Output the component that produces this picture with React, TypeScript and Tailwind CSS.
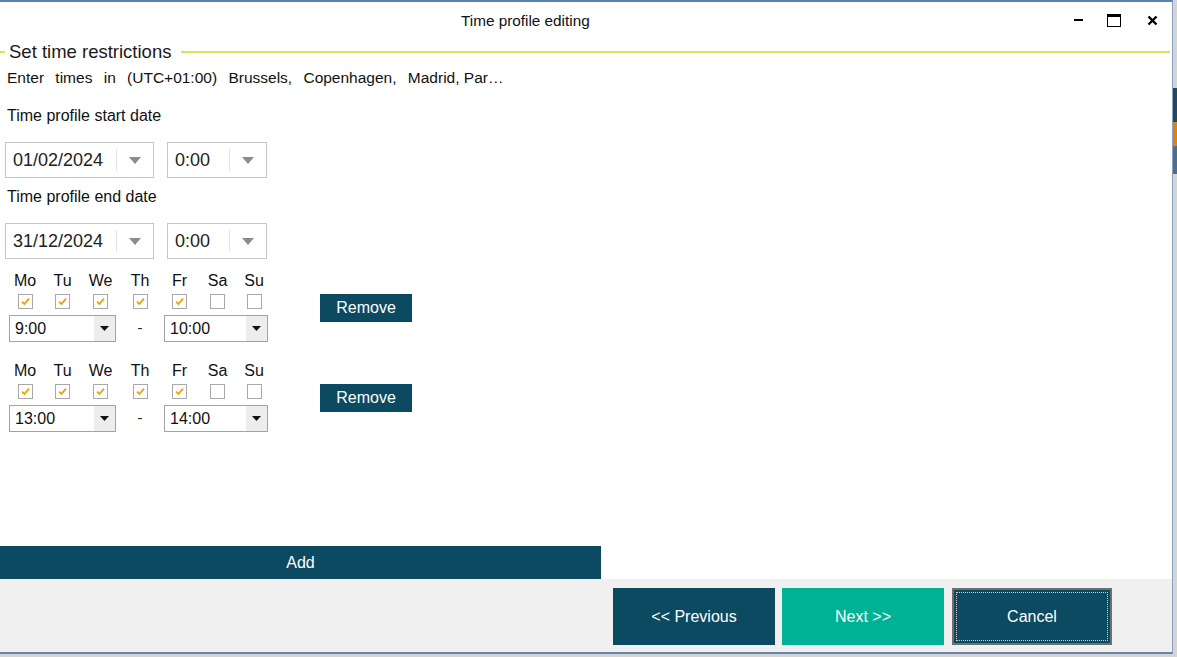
import React from "react";

const font = { fontFamily: '"Liberation Sans", Arial, sans-serif' };

const days = ["Mo", "Tu", "We", "Th", "Fr", "Sa", "Su"];

function Check({ on }: { on: boolean }) {
  return (
    <div className="flex h-[15px] w-[15px] items-center justify-center border border-[#a9a9a9] bg-white">
      {on && (
        <svg width="11" height="11" viewBox="0 0 11 11">
          <path d="M2 5.6 L4.4 8 L9 2.6" fill="none" stroke="#f5a000" strokeWidth="1.8" />
        </svg>
      )}
    </div>
  );
}

function DatePicker({ value, width }: { value: string; width: string }) {
  return (
    <div className={`flex h-[36px] ${width} items-center border border-[#c6c6c6] bg-white`}>
      <span className="flex-1 pl-[7px] text-[18px] text-[#222]">{value}</span>
      <div className="h-[22px] w-px bg-[#e3e3e3]" />
      <div className="flex w-[36px] items-center justify-center">
        <svg width="12" height="7" viewBox="0 0 12 7">
          <path d="M0 0 H12 L6 7 Z" fill="#8c8c8c" />
        </svg>
      </div>
    </div>
  );
}

function Combo({ value, width }: { value: string; width: string }) {
  return (
    <div className={`flex h-[27px] ${width} items-stretch border border-[#a3a3a3] bg-white`}>
      <span className="flex flex-1 items-center pl-[5px] text-[16px] text-[#111]">{value}</span>
      <div className="flex w-[21px] items-center justify-center bg-[#ededed]">
        <svg width="9" height="5" viewBox="0 0 9 5">
          <path d="M0 0 H9 L4.5 5 Z" fill="#111" />
        </svg>
      </div>
    </div>
  );
}

function Schedule({ from, to, mt }: { from: string; to: string; mt: string }) {
  const checked = [true, true, true, true, true, false, false];
  return (
    <div className={`flex ${mt}`}>
      <div className="w-[300px]">
        <div className="ml-[6px] grid grid-cols-[38px_37px_39px_40px_39px_37px_36px]">
          {days.map((d, i) => (
            <div key={d} className="flex flex-col items-center">
              <span className="h-[18px] text-[16px] leading-[18px] text-[#111]">{d}</span>
              <div className="mt-[4px]">
                <Check on={checked[i]} />
              </div>
            </div>
          ))}
        </div>
        <div className="ml-[9px] mt-[6px] flex items-center">
          <Combo value={from} width="w-[107px]" />
          <span className="w-[48px] text-center text-[15px] text-[#222]">-</span>
          <Combo value={to} width="w-[104px]" />
        </div>
      </div>
      <button className="ml-[20px] mt-[22px] h-[28px] w-[92px] self-start bg-[#0b4a61] text-[16px] text-white">
        Remove
      </button>
    </div>
  );
}

export default function App() {
  return (
    <div className="flex h-[657px] w-[1177px] overflow-hidden bg-[#d4d4d4]" style={font}>
      <div className="flex h-[654px] w-[1173px] flex-col border-b-2 border-r border-t-2 border-[#5b7fb8] border-b-[#6b83ab] border-r-[#8aa0c4] bg-white">
        {/* title bar */}
        <div className="relative flex h-[36px] items-center">
          <span className="absolute left-[461px] top-[8px] text-[15.3px] text-[#111]">Time profile editing</span>
          <div className="ml-auto flex items-center">
            <div className="flex w-[36px] justify-center">
              <div className="h-[2px] w-[9px] bg-black" />
            </div>
            <div className="flex w-[36px] justify-center">
              <div className="h-[13px] w-[14px] border-[1.5px] border-t-[3px] border-black" />
            </div>
            <div className="flex w-[40px] justify-center">
              <svg width="11" height="11" viewBox="0 0 11 11">
                <path d="M1.5 1.5 L9.5 9.5 M9.5 1.5 L1.5 9.5" stroke="#000" strokeWidth="2.4" />
              </svg>
            </div>
          </div>
        </div>

        {/* content */}
        <div className="relative flex flex-1 flex-col">
          <div className="mt-[3px] flex h-[22px] items-center pr-[2px]">
            <div className="h-[2px] w-[5px] bg-[#d7e454]" />
            <span className="px-[4px] text-[18.5px] text-[#1a1a1a]">Set time restrictions</span>
            <div className="ml-[6px] h-[2px] flex-1 bg-[#d7e454]" />
          </div>
          <div className="mt-[5px] h-[20px] pl-[7px] text-[15.5px] leading-[20px] text-[#111] [word-spacing:7px]">
            Enter times in (UTC+01:00) Brussels, Copenhagen, Madrid,<span className="[word-spacing:0px]"> Par…</span>
          </div>
          <div className="mt-[18px] h-[20px] pl-[7px] text-[16px] leading-[20px] text-[#111]">Time profile start date</div>
          <div className="ml-[5px] mt-[16px] flex gap-[13px]">
            <DatePicker value="01/02/2024" width="w-[149px]" />
            <DatePicker value="0:00" width="w-[100px]" />
          </div>
          <div className="mt-[9px] h-[20px] pl-[7px] text-[16px] leading-[20px] text-[#111]">Time profile end date</div>
          <div className="ml-[5px] mt-[16px] flex gap-[13px]">
            <DatePicker value="31/12/2024" width="w-[149px]" />
            <DatePicker value="0:00" width="w-[100px]" />
          </div>
          <Schedule from="9:00" to="10:00" mt="mt-[13px]" />
          <Schedule from="13:00" to="14:00" mt="mt-[20px]" />
          <div className="mt-auto">
            <button className="h-[33px] w-[601px] bg-[#0b4a61] text-[16px] text-white">Add</button>
          </div>
        </div>

        {/* footer */}
        <div className="flex h-[73px] items-start justify-end gap-[7px] bg-[#f0f0f0] pr-[60px] pt-[9px]">
          <button className="h-[57px] w-[162px] bg-[#0b4a61] text-[16px] text-white">&lt;&lt; Previous</button>
          <button className="h-[57px] w-[162px] bg-[#00b294] text-[16px] text-white">Next &gt;&gt;</button>
          <button className="ml-[1px] flex h-[57px] w-[160px] items-center justify-center border-2 border-[#6e6e6e] bg-[#0b4a61] p-[2px] text-[16px] text-white">
            <span className="flex h-full w-full items-center justify-center border border-dotted border-[#d0d0d0]">Cancel</span>
          </button>
        </div>
      </div>
      {/* background window peeking through */}
      <div className="flex w-[4px] flex-col">
        <div className="mt-[88px] h-[34px] bg-[#22495e]" />
        <div className="h-[24px] bg-[#d6851c]" />
        <div className="h-[28px] bg-[#4f6f86]" />
      </div>
    </div>
  );
}
